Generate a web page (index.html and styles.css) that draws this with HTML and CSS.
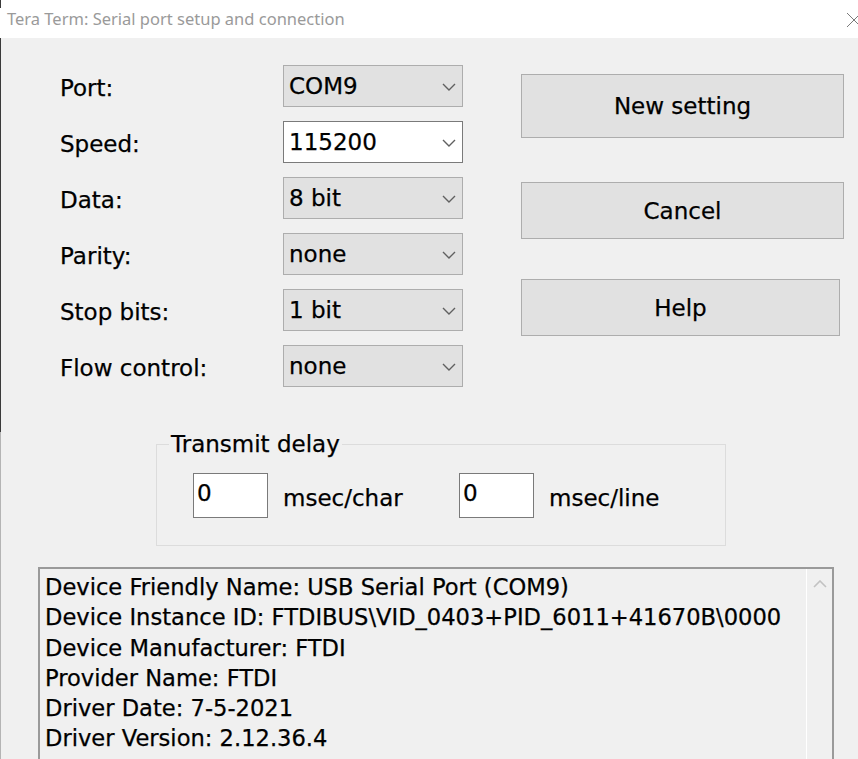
FILE: index.html
```html
<!DOCTYPE html>
<html>
<head>
<meta charset="utf-8">
<title>Tera Term: Serial port setup and connection</title>
<link rel="stylesheet" href="styles.css">
</head>
<body>
<div class="window">
  <div class="edge"></div>
  <div class="titlebar">
    <span class="title">Tera Term: Serial port setup and connection</span>
    <svg class="close" width="16" height="16" viewBox="0 0 16 16"><path d="M1 1 L15 15 M15 1 L1 15" stroke="#7a7a7a" stroke-width="1" fill="none"/></svg>
  </div>
  <div class="content">
    <div class="top">
      <div class="form">
        <span class="label">Port:</span>
        <div class="combo"><span>COM9</span><svg class="chev" width="14" height="8" viewBox="0 0 14 8"><path d="M1 1 L7 7 L13 1" stroke="#606060" stroke-width="1.4" fill="none"/></svg></div>
        <span class="label">Speed:</span>
        <div class="combo focus"><span>115200</span><svg class="chev" width="14" height="8" viewBox="0 0 14 8"><path d="M1 1 L7 7 L13 1" stroke="#606060" stroke-width="1.4" fill="none"/></svg></div>
        <span class="label">Data:</span>
        <div class="combo"><span>8 bit</span><svg class="chev" width="14" height="8" viewBox="0 0 14 8"><path d="M1 1 L7 7 L13 1" stroke="#606060" stroke-width="1.4" fill="none"/></svg></div>
        <span class="label">Parity:</span>
        <div class="combo"><span>none</span><svg class="chev" width="14" height="8" viewBox="0 0 14 8"><path d="M1 1 L7 7 L13 1" stroke="#606060" stroke-width="1.4" fill="none"/></svg></div>
        <span class="label">Stop bits:</span>
        <div class="combo"><span>1 bit</span><svg class="chev" width="14" height="8" viewBox="0 0 14 8"><path d="M1 1 L7 7 L13 1" stroke="#606060" stroke-width="1.4" fill="none"/></svg></div>
        <span class="label">Flow control:</span>
        <div class="combo"><span>none</span><svg class="chev" width="14" height="8" viewBox="0 0 14 8"><path d="M1 1 L7 7 L13 1" stroke="#606060" stroke-width="1.4" fill="none"/></svg></div>
      </div>
      <div class="buttons">
        <div class="btn btn-new">New setting</div>
        <div class="btn btn-cancel">Cancel</div>
        <div class="btn btn-help">Help</div>
      </div>
    </div>
    <fieldset class="delay">
      <legend>Transmit delay</legend>
      <div class="delay-row">
        <div class="num">0</div>
        <span class="unit unit-char">msec/char</span>
        <div class="num">0</div>
        <span class="unit">msec/line</span>
      </div>
    </fieldset>
    <div class="info">
      <div class="info-text">
        <div>Device Friendly Name: USB Serial Port (COM9)</div>
        <div>Device Instance ID: FTDIBUS\VID_0403+PID_6011+41670B\0000</div>
        <div>Device Manufacturer: FTDI</div>
        <div>Provider Name: FTDI</div>
        <div>Driver Date: 7-5-2021</div>
        <div>Driver Version: 2.12.36.4</div>
      </div>
      <div class="scroll">
        <svg class="up" width="14" height="8" viewBox="0 0 14 8"><path d="M1 7 L7 1 L13 7" stroke="#c2c2c2" stroke-width="1.6" fill="none"/></svg>
      </div>
    </div>
  </div>
</div>
</body>
</html>
```

FILE: styles.css
```css
html, body {
  margin: 0;
  padding: 0;
}
body {
  width: 858px;
  height: 759px;
  overflow: hidden;
  background: #f0f0f0;
}
.window {
  position: relative;
  width: 858px;
  height: 759px;
  overflow: hidden;
  font-family: "DejaVu Sans", sans-serif;
  font-size: 23px;
  color: #000;
  -webkit-text-stroke: 0.25px #000;
}
.edge {
  position: absolute;
  left: 0;
  top: 0;
  width: 1px;
  height: 759px;
  background: linear-gradient(to bottom, #3a3a3a 0, #3a3a3a 8px, transparent 8px, transparent 38px, #3a3a3a 38px, #3a3a3a 432px, #b4b4b4 432px, #b4b4b4 100%);
}
.titlebar {
  height: 38px;
  background: #ffffff;
  display: flex;
  align-items: center;
  justify-content: space-between;
}
.title {
  font-family: "Noto Sans", sans-serif;
  font-size: 16.5px;
  color: #9a9a9a;
  padding-left: 7px;
  margin-top: -1px;
  -webkit-text-stroke: 0;
}
.close {
  margin-right: -4px;
  margin-top: 1px;
}
.content {
  background: #f0f0f0;
}
.top {
  display: flex;
  padding-top: 27px;
}
.form {
  display: grid;
  grid-template-columns: 223px 180px;
  grid-auto-rows: 42px;
  row-gap: 14px;
  padding-left: 60px;
  align-items: center;
}
.label {
  line-height: 42px;
  padding-top: 3px;
}
.combo {
  box-sizing: border-box;
  height: 42px;
  background: #e1e1e1;
  border: 1px solid #adadad;
  display: flex;
  align-items: center;
  justify-content: space-between;
  padding: 0 6px 0 5px;
}
.combo span {
  margin-top: -1px;
}
.combo.focus {
  background: #ffffff;
  border-color: #7a7a7a;
}
.chev {
  margin-top: 2px;
}
.buttons {
  margin-left: 58px;
  display: flex;
  flex-direction: column;
}
.btn {
  box-sizing: border-box;
  width: 323px;
  background: #e1e1e1;
  border: 1px solid #adadad;
  display: flex;
  align-items: center;
  justify-content: center;
}
.btn-new {
  margin-top: 9px;
  height: 64px;
}
.btn-cancel {
  margin-top: 44px;
  height: 57px;
}
.btn-help {
  margin-top: 40px;
  height: 57px;
  width: 319px;
}
.delay {
  box-sizing: border-box;
  margin: 44px 0 0 156px;
  width: 570px;
  height: 115px;
  border: 1px solid #dcdcdc;
  padding: 0;
  min-width: 0;
}
.delay legend {
  margin-left: 12px;
  padding: 0 2px;
  line-height: 27px;
}
.delay-row {
  display: flex;
  align-items: center;
  padding-left: 36px;
  margin-top: 15px;
}
.num {
  box-sizing: border-box;
  width: 75px;
  height: 45px;
  background: #ffffff;
  border: 1px solid #7a7a7a;
  padding: 7px 0 0 3px;
  line-height: 24px;
  margin-right: 15px;
}
.unit {
  padding-top: 4px;
}
.unit-char {
  width: 176px;
}
.info {
  box-sizing: border-box;
  margin: 21px 0 0 38px;
  width: 796px;
  height: 200px;
  border: 2px solid #9a9a9a;
  display: flex;
  font-size: 22.6px;
}
.info-text {
  flex: 1;
  padding: 3px 0 0 5px;
  line-height: 30.3px;
}
.scroll {
  width: 26px;
  border-left: 1px solid #ffffff;
  display: flex;
  justify-content: center;
  padding-top: 11px;
  box-sizing: border-box;
  -webkit-text-stroke: 0;
}
.up {
  display: block;
}
```
